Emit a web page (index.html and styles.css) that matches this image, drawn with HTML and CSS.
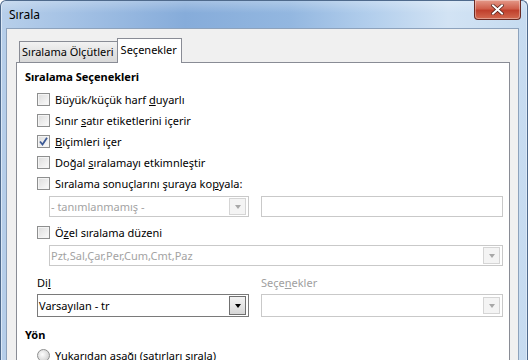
FILE: index.html
```html
<!DOCTYPE html>
<html lang="tr">
<head>
  <meta charset="UTF-8" />
  <title>Sırala</title>
  <link rel="stylesheet" href="styles.css">
</head>
<body>
  <div class="window">
    <div class="titlebar">
      <span class="title">Sırala</span>
      <button class="close-btn" type="button">
        <svg width="13" height="11" viewBox="0 0 13 11">
          <path d="M2 1.5 L11 9.5 M11 1.5 L2 9.5" stroke="#4a1a14" stroke-width="3.4" stroke-linecap="square" />
          <path d="M2 1.5 L11 9.5 M11 1.5 L2 9.5" stroke="#fff" stroke-width="2" stroke-linecap="square" />
        </svg>
      </button>
    </div>

    <div class="client">
      <div class="tabs">
        <div class="tab">Sıralama Ölçütleri</div>
        <div class="tab active">Seçenekler</div>
      </div>

      <div class="panel">
        <div class="group-title">Sıralama Seçenekleri</div>

        <label class="check-row"><span class="checkbox"></span><span>Büyük/küçük harf <u>d</u>uyarlı</span></label>
        <label class="check-row"><span class="checkbox"></span><span>Sınır <u>s</u>atır etiketlerini içerir</span></label>
        <label class="check-row"><span class="checkbox checked">
          <svg width="9" height="9" viewBox="0 0 9 9"><path d="M1 4.5 L3.5 7.5 L8 0.8" fill="none" stroke="#3c5a96" stroke-width="1.8" /></svg>
        </span><span><u>B</u>içimleri içer</span></label>
        <label class="check-row"><span class="checkbox"></span><span>Doğal <u>s</u>ıralamayı etkimnleştir</span></label>
        <label class="check-row"><span class="checkbox"></span><span>Sıralama sonuçlarını şuraya ko<u>p</u>yala:</span></label>

        <div class="field-row indent">
          <div class="combo disabled small">
            <span class="combo-text">- tanımlanmamış -</span>
            <span class="combo-btn"><span class="arrow"></span></span>
          </div>
          <div class="textbox wide"></div>
        </div>

        <label class="check-row gap-top"><span class="checkbox"></span><span>Ö<u>z</u>el sıralama düzeni</span></label>

        <div class="field-row indent">
          <div class="combo disabled full">
            <span class="combo-text">Pzt,Sal,Çar,Per,Cum,Cmt,Paz</span>
            <span class="combo-btn"><span class="arrow"></span></span>
          </div>
        </div>

        <div class="label-row">
          <span class="field-label">Di<u>l</u></span>
          <span class="field-label muted">Seçe<u>n</u>ekler</span>
        </div>

        <div class="field-row">
          <div class="combo lang">
            <span class="combo-text">Varsayılan - tr</span>
            <span class="combo-btn"><span class="arrow"></span></span>
          </div>
          <div class="combo disabled wide">
            <span class="combo-text"></span>
            <span class="combo-btn"><span class="arrow"></span></span>
          </div>
        </div>

        <div class="group-title second">Yön</div>
        <label class="check-row"><span class="radio"></span><span>Yukarıdan aşağı (satırları sırala)</span></label>
      </div>
    </div>
  </div>
</body>
</html>
```

FILE: styles.css
```css
body {
  margin: 0;
  width: 528px;
  height: 360px;
  overflow: hidden;
  font-family: "Noto Sans", "Open Sans", sans-serif;
  font-size: 11px;
  color: #000;
}

.window {
  height: 360px;
  box-sizing: border-box;
  padding: 0 9px 0 6px;
  border: 1px solid #4f6a8c;
  border-bottom: none;
  border-radius: 6px 6px 0 0;
  background:
    linear-gradient(to bottom, rgba(255,255,255,0.25), rgba(255,255,255,0) 12px),
    linear-gradient(to right, #b7cfea, #a2c0e4 15%, #86acda 35%, #93b7e0 55%, #b2ceec 70%, #d2e3f4 85%, #c6dbf0);
  box-shadow: inset 1px 0 0 #dbe8f6, inset -1px 0 0 #dbe8f6;
}

.titlebar {
  height: 27px;
  display: flex;
  align-items: center;
  justify-content: space-between;
  position: relative;
}

.title {
  margin-left: 2px;
  margin-top: -1px;
  font-size: 12px;
}

.close-btn {
  position: absolute;
  top: -1px;
  right: -3px;
  width: 47px;
  height: 20px;
  padding: 0;
  border: 1px solid #6a2a22;
  border-top: none;
  border-radius: 0 0 4px 4px;
  background: linear-gradient(to bottom, #e49a8a, #d0604c 45%, #c0402c 55%, #d36a50);
  box-shadow: inset 0 0 0 1px rgba(255,255,255,0.35);
  display: flex;
  align-items: center;
  justify-content: center;
}

.client {
  background: #f0f0f0;
  height: 333px;
  padding: 9px 0 0 9px;
  border-top: 1px solid #8da2bc;
  box-shadow: -1px 0 0 #8da2bc, 1px 0 0 #8da2bc;
}

.tabs {
  display: flex;
  align-items: flex-end;
  height: 24px;
  padding-left: 3px;
  position: relative;
  z-index: 1;
}

.tab {
  height: 21px;
  padding: 0 3px 0 2px;
  box-sizing: border-box;
  border: 1px solid #898c95;
  border-bottom: none;
  background: linear-gradient(to bottom, #f2f2f2, #e3e3e3 50%, #d9d9d9);
  line-height: 20px;
}

.tab + .tab {
  margin-left: -1px;
}

.tab.active {
  height: 25px;
  margin-bottom: -1px;
  padding: 0 4px 0 3px;
  background: #fff;
  line-height: 21px;
}

.panel {
  width: 494px;
  height: 320px;
  box-sizing: border-box;
  border: 1px solid #898c95;
  background: #fff;
  padding-left: 8px;
}

.group-title {
  font-weight: bold;
  height: 26px;
  line-height: 28px;
}

.group-title.second {
  margin-top: 8px;
  height: 20px;
  line-height: 19px;
}

.check-row {
  display: flex;
  align-items: center;
  gap: 5px;
  height: 21px;
  margin-left: 12px;
}

.check-row.gap-top {
  margin-top: 5px;
}

.checkbox {
  width: 11px;
  height: 11px;
  border: 1px solid #8e8f8f;
  background: linear-gradient(to bottom right, #dcdcdc, #fbfbfb);
  box-shadow: inset 0 0 0 1px #f4f4f4;
  display: flex;
  align-items: center;
  justify-content: center;
  flex-shrink: 0;
}

.radio {
  width: 11px;
  height: 11px;
  border: 1px solid #8e8f8f;
  border-radius: 50%;
  background: radial-gradient(circle at 40% 40%, #fdfdfd, #d6d6d6 70%);
  flex-shrink: 0;
}

.field-row {
  display: flex;
  gap: 12px;
  margin-top: 2px;
  margin-left: 12px;
}

.field-row.indent {
  margin-left: 24px;
}

.combo,
.textbox {
  height: 21px;
  box-sizing: border-box;
  border: 1px solid #c9c9c9;
  background: #fff;
  display: flex;
  align-items: center;
  justify-content: space-between;
}

.combo-text {
  padding-left: 1px;
  white-space: nowrap;
}

.combo.small { width: 200px; }
.combo.full { width: 454px; }
.combo.lang { width: 212px; height: 23px; border-color: #7a7a7a; }
.textbox.wide,
.combo.wide { width: 242px; }
.combo.wide { height: 23px; }

.combo.disabled .combo-text {
  color: #a3a3a3;
}

.combo-btn {
  width: 15px;
  height: 15px;
  margin-right: 2px;
  border: 1px solid #d5d5d5;
  background: #f4f4f4;
  display: flex;
  align-items: center;
  justify-content: center;
}

.combo.lang .combo-btn {
  height: 17px;
  border-color: #707070;
  background: linear-gradient(to bottom, #f2f2f2, #e6e6e6 50%, #d6d6d6);
}

.arrow {
  width: 0;
  height: 0;
  border-left: 3.5px solid transparent;
  border-right: 3.5px solid transparent;
  border-top: 4px solid #a8a8a8;
}

.combo.lang .arrow {
  border-top-color: #000;
}

.label-row {
  display: flex;
  height: 20px;
  align-items: center;
  margin-top: 6px;
  margin-left: 12px;
}

.field-label {
  width: 224px;
}

.muted {
  color: #a0a0a0;
}
```
